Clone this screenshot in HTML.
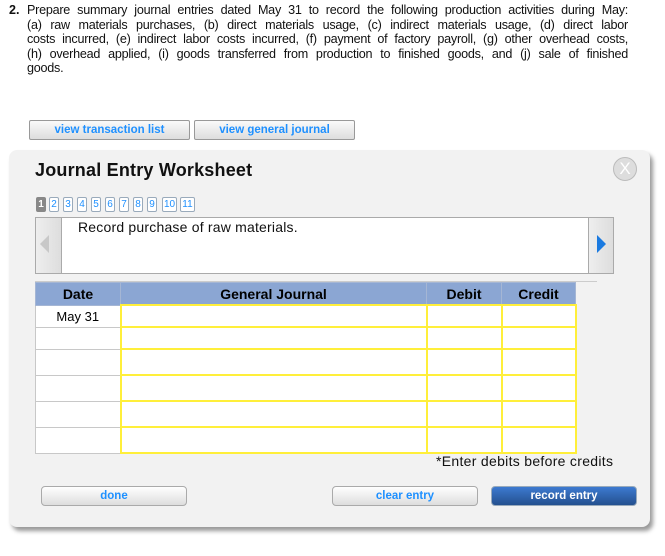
<!DOCTYPE html>
<html><head><style>
body{margin:0;width:665px;height:556px;background:#fff;font-family:"Liberation Sans",sans-serif;position:relative;overflow:hidden}
.abs{position:absolute}
.q{left:9px;top:3px;font-size:12.5px;line-height:14.6px;color:#111}
.ln{position:absolute;left:27px;width:601px;font-size:12.6px;letter-spacing:-0.25px;line-height:14.6px;text-align:justify;text-align-last:justify;color:#111}
.btn{height:18px;border:1px solid #999;border-radius:2px;background:linear-gradient(#fafafa,#ddd);color:#1e90ff;font-size:11.5px;font-weight:bold;text-align:center;line-height:18px}
.panel{left:9px;top:150px;width:641px;height:377px;background:#f2f2f2;border-radius:8px;box-shadow:3px 4px 4px #999}
.num{top:197px;height:13px;width:8px;border:1px solid #9ab;border-radius:2px;background:#fff;color:#1e90ff;font-size:10px;line-height:13px;text-align:center}
table{border-collapse:collapse;position:absolute;left:35px;top:282px}
td{border:1px solid #c8c8c8;padding:0;background:#fff}
th{background:#8ba6d3;border:1px solid #a5b6d4;font-size:14px;height:21px;padding:0}
td.y{border:2px solid #ffef3a}
.rb{height:18px;border:1px solid #aaa;border-radius:4px;background:linear-gradient(#fff,#ddd);font-size:11.5px;font-weight:bold;text-align:center;line-height:18px;color:#1e90ff}
</style></head><body>
<div class="abs q"><b>2.</b></div>
<div class="ln" style="top:3px">Prepare summary journal entries dated May 31 to record the following production activities during May:</div>
<div class="ln" style="top:17.6px">(a) raw materials purchases, (b) direct materials usage, (c) indirect materials usage, (d) direct labor</div>
<div class="ln" style="top:32.2px">costs incurred, (e) indirect labor costs incurred, (f) payment of factory payroll, (g) other overhead costs,</div>
<div class="ln" style="top:46.8px">(h) overhead applied, (i) goods transferred from production to finished goods, and (j) sale of finished</div>
<div class="ln" style="top:61.4px;text-align-last:left">goods.</div>
<div class="abs btn" style="left:29px;top:120px;width:159px">view transaction list</div>
<div class="abs btn" style="left:194px;top:120px;width:159px">view general journal</div>
<div class="abs panel"></div>
<div class="abs" style="left:35px;top:160px;font-size:18px;font-weight:bold;color:#111;letter-spacing:0.2px">Journal Entry Worksheet</div>
<div class="abs" style="left:613px;top:157px;width:22px;height:22px;border-radius:50%;border:1px solid #bbb;background:#ddd;color:#fff;font-size:17px;line-height:22px;text-align:center">X</div>
<div class="abs num" style="left:36px;background:#888;color:#fff;border-color:#888;font-weight:bold">1</div>
<div class="abs num" style="left:49px">2</div>
<div class="abs num" style="left:63px">3</div>
<div class="abs num" style="left:77px">4</div>
<div class="abs num" style="left:91px">5</div>
<div class="abs num" style="left:105px">6</div>
<div class="abs num" style="left:119px">7</div>
<div class="abs num" style="left:133px">8</div>
<div class="abs num" style="left:147px">9</div>
<div class="abs num" style="left:162px;width:13px">10</div>
<div class="abs num" style="left:180px;width:13px">11</div>
<div class="abs" style="left:35px;top:217px;width:577px;height:55px;border:1px solid #aaa;background:#fff"></div>
<div class="abs" style="left:35px;top:217px;width:25px;height:55px;border:1px solid #aaa;background:linear-gradient(90deg,#eee,#ddd)"></div>
<div class="abs" style="left:40px;top:235px;width:0;height:0;border-top:9px solid transparent;border-bottom:9px solid transparent;border-right:9px solid #c8c8c8"></div>
<div class="abs" style="left:588px;top:217px;width:24px;height:55px;border:1px solid #aaa;background:linear-gradient(90deg,#eee,#ddd)"></div>
<div class="abs" style="left:597px;top:235px;width:0;height:0;border-top:9px solid transparent;border-bottom:9px solid transparent;border-left:9px solid #1a7ae0"></div>
<div class="abs" style="left:78px;top:219px;font-size:14px;color:#111;letter-spacing:0.2px">Record purchase of raw materials.</div>
<div class="abs" style="left:35px;top:281px;width:562px;height:1px;background:#ccc"></div>
<table>
<tr><th style="width:84px">Date</th><th style="width:305px">General Journal</th><th style="width:74px">Debit</th><th style="width:73px">Credit</th></tr>
<tr style="height:22px"><td style="text-align:center;font-size:13px">May 31</td><td class="y"></td><td class="y"></td><td class="y"></td></tr>
<tr style="height:22px"><td></td><td class="y"></td><td class="y"></td><td class="y"></td></tr>
<tr style="height:26px"><td></td><td class="y"></td><td class="y"></td><td class="y"></td></tr>
<tr style="height:26px"><td></td><td class="y"></td><td class="y"></td><td class="y"></td></tr>
<tr style="height:26px"><td></td><td class="y"></td><td class="y"></td><td class="y"></td></tr>
<tr style="height:26px"><td></td><td class="y"></td><td class="y"></td><td class="y"></td></tr>
</table>
<div class="abs" style="left:436px;top:453px;font-size:14px;color:#111;letter-spacing:0.3px">*Enter debits before credits</div>
<div class="abs rb" style="left:41px;top:486px;width:144px">done</div>
<div class="abs rb" style="left:332px;top:486px;width:144px">clear entry</div>
<div class="abs rb" style="left:491px;top:486px;width:144px;background:linear-gradient(#3d7ad0,#24508f);color:#fff;border-color:#9ab">record entry</div>
</body></html>
